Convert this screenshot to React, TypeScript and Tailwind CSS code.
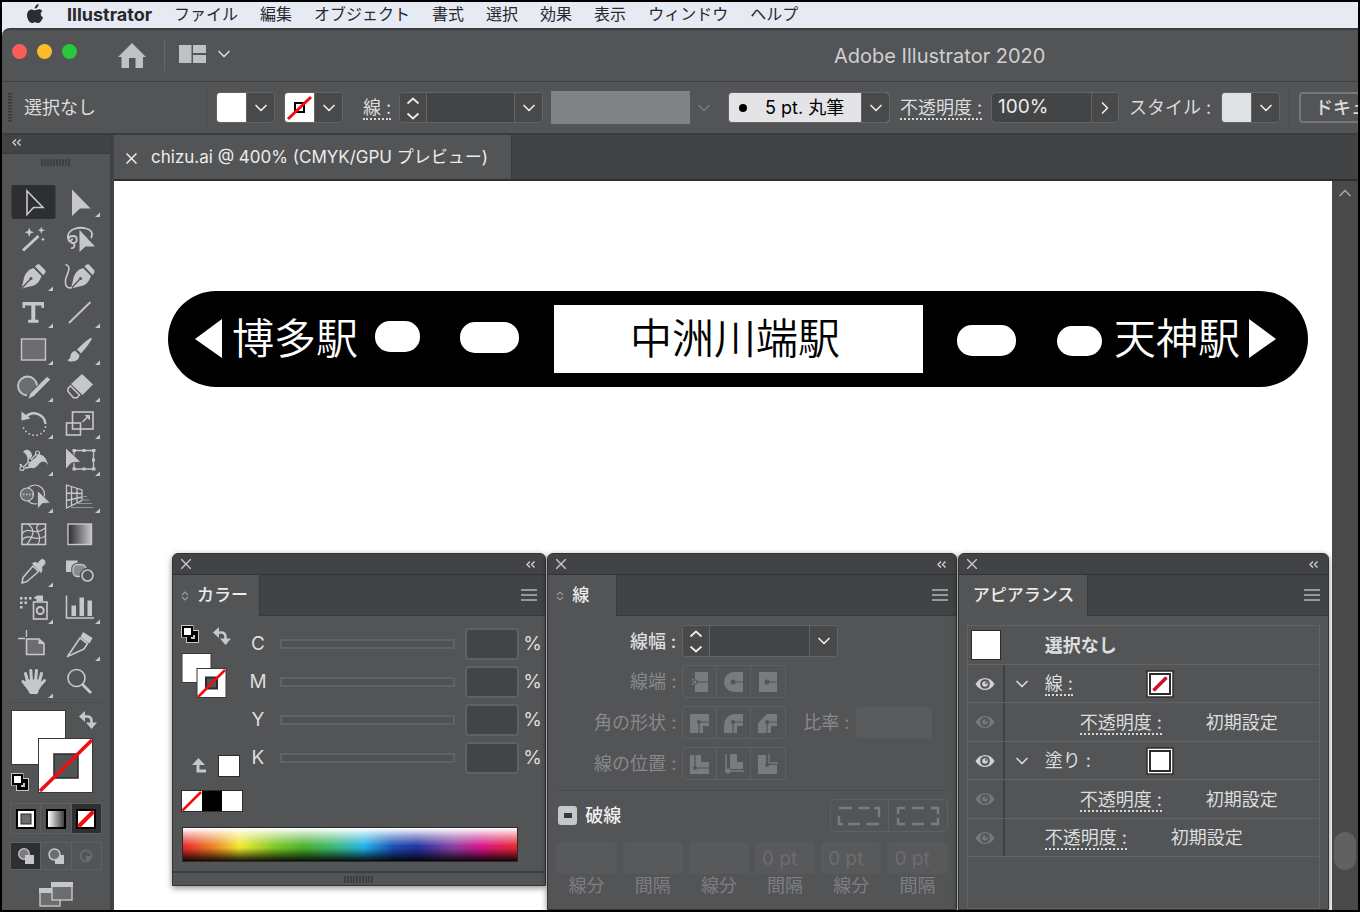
import React, { useState } from "react";
import clsx from "clsx";
import { ChevronDown, ChevronRight, ChevronUp } from "lucide-react";

type Tool = {
  id: string;
  label: string;
  more?: boolean;
  icon: React.ReactNode;
};

const MENUS = ["ファイル", "編集", "オブジェクト", "書式", "選択", "効果", "表示", "ウィンドウ", "ヘルプ"];

const CHANNELS = ["C", "M", "Y", "K"];

const DASHES = [
  { label: "線分", value: "" },
  { label: "間隔", value: "" },
  { label: "線分", value: "" },
  { label: "間隔", value: "0 pt" },
  { label: "線分", value: "0 pt" },
  { label: "間隔", value: "0 pt" },
];

const LIGHT = "#c6c7c9";
const line = { fill: "none", stroke: LIGHT, strokeWidth: 1.6 };

// every tool icon is drawn in a 47x37 cell
const TOOLS: Tool[] = [
  {
    id: "select",
    label: "選択",
    icon: <path d="M17 7V30.5L23.5 23.5H33Z" {...line} />,
  },
  {
    id: "direct",
    label: "ダイレクト選択",
    more: true,
    icon: <path d="M15 5.5V32L23 24.5H33.5Z" fill={LIGHT} />,
  },
  {
    id: "wand",
    label: "自動選択",
    icon: (
      <>
        <path d="M13 29.5L28.5 15" fill="none" stroke={LIGHT} strokeWidth="3" />
        <path
          d="M19.3 6.5L20.5 10L24 11.3L20.5 12.6L19.3 16L18 12.6L14.5 11.3L18 10ZM31.3 5.5L32.2 8.2L35 9.2L32.2 10.2L31.3 13L30.4 10.2L27.6 9.2L30.4 8.2ZM33 16.3L33.7 17.8L35 18.4L33.7 19L33 20.6L32.3 19L31 18.4L32.3 17.8Z"
          fill={LIGHT}
        />
      </>
    ),
  },
  {
    id: "lasso",
    label: "なげなわ",
    icon: (
      <>
        <path
          d="M14 21C9 18 10 11 17 8C25 5 35 8 35 13C35 15 34.5 16 34 17M14 21C10 20 11 15 16 15C21 15 21 22 16 22C13 22 13 18 16 18.5M16 22C19 24 17 28 14 27"
          {...line}
          strokeWidth="1.8"
        />
        <path d="M22.5 9V31L28.5 25.5H38Z" fill={LIGHT} />
      </>
    ),
  },
  {
    id: "pen",
    label: "ペン",
    more: true,
    icon: (
      <>
        <path d="M25 8.5Q27.5 5.5 29.5 6.5L35.5 12.5Q36 15 33 17Z" fill={LIGHT} />
        <path d="M23.5 10L31.5 18Q29 25.5 24 27.5L11.5 30.5L14.5 18Q17 12 23.5 10Z" fill={LIGHT} />
        <path d="M24 9.2L32.4 17.600" stroke="#535456" strokeWidth="1" />
        <path d="M12 30L20 21.5" stroke="#535456" strokeWidth="1.3" />
        <circle cx="21" cy="20.5" r="1.6" fill="#535456" />
      </>
    ),
  },
  {
    id: "curvature",
    label: "曲線",
    icon: (
      <>
        <path d="M27.5 8.5Q30 5.5 32 6.5L37.5 12.5Q38 15 35.5 17Z" fill={LIGHT} />
        <path d="M26 10L34 18Q31.5 25.5 26.5 27.5L14 30.5L17 18Q19.5 12 26 10Z" fill={LIGHT} />
        <path d="M26.5 9.2L34.900 17.600" stroke="#535456" strokeWidth="1" />
        <path d="M14.5 30L22.5 21.5" stroke="#535456" strokeWidth="1.3" />
        <circle cx="23.5" cy="20.5" r="1.6" fill="#535456" />
        <path d="M8.500 6.500C16 9 9 17 8.500 22C8 28 10 31 15 29.500" {...line} />
      </>
    ),
  },
  {
    id: "type",
    label: "文字",
    more: true,
    icon: (
      <path
        d="M12.5 7H34V13H31.5V10.500H25.300V24.800H28.500V27.700H18.200V24.800H21.300V10.500H15V13H12.5Z"
        fill={LIGHT}
      />
    ),
  },
  {
    id: "line",
    label: "直線",
    more: true,
    icon: <path d="M12 28L33.5 7" {...line} strokeWidth="1.8" />,
  },
  {
    id: "rect",
    label: "長方形",
    more: true,
    icon: <rect x="11.5" y="7" width="24" height="21" {...line} fill="#6c6d6f" strokeWidth="1.4" />,
  },
  {
    id: "brush",
    label: "ブラシ",
    more: true,
    icon: (
      <>
        <path d="M35 5.5Q35 9 24 21.5L20 17.5Q31.5 6 35 5.5Z" fill={LIGHT} />
        <path d="M18.5 19L22.5 23Q22 29.5 15 29.5Q11 29.5 10.5 28Q13.5 27 13.5 23.5Q14.5 19 18.5 19Z" fill={LIGHT} />
      </>
    ),
  },
  {
    id: "shaper",
    label: "Shaper",
    more: true,
    icon: (
      <>
        <path d="M17 26.500A9.500 9.500 0 1 1 27 16.500" {...line} fill="#6c6d6f" strokeWidth="1.8" />
        <path d="M37 7.5L40.5 10.5L23.5 27.5L18 30L20 24.5Z" fill={LIGHT} stroke="#535456" strokeWidth="0.6" />
      </>
    ),
  },
  {
    id: "eraser",
    label: "消しゴム",
    more: true,
    icon: (
      <>
        <path d="M25 5L36 15.5L25.5 26L14 15Z" fill={LIGHT} />
        <path d="M13.5 17L22.5 26L20 28.8H16.5L11 22.5V19.5Z" {...line} />
      </>
    ),
  },
  {
    id: "rotate",
    label: "回転",
    more: true,
    icon: (
      <>
        <path d="M16 10.5C23 4 34.5 8 35.5 18" {...line} strokeWidth="2.4" />
        <path d="M11.5 5.5V14.5L20.5 12.5Z" fill={LIGHT} />
        <path
          d="M35.5 21C34 31 18 33 13 21"
          fill="none"
          stroke={LIGHT}
          strokeWidth="1.8"
          strokeDasharray="0.1 4"
          strokeLinecap="round"
        />
      </>
    ),
  },
  {
    id: "scale",
    label: "拡大・縮小",
    more: true,
    icon: (
      <>
        <rect x="15.5" y="6" width="20.5" height="17" {...line} />
        <rect x="9.5" y="17" width="14" height="12" {...line} />
        <path d="M25.5 16L31 10.5" {...line} />
        <path d="M27.5 9H33V14.5Z" fill={LIGHT} />
      </>
    ),
  },
  {
    id: "width",
    label: "線幅",
    more: true,
    icon: (
      <>
        <path
          d="M13 9C16 4 22 8 22 12C22 16 24 17 26 14C29 9 36 12 38 22C35 17 31 18 29 21C25 27 18 26 18 21C18 15 17 11 13 9Z"
          fill={LIGHT}
        />
        <path d="M10.5 21C11 25 17 26 22 23" {...line} strokeWidth="2" />
        <path d="M12 25.5L27.5 10" stroke="#535456" strokeWidth="3" />
        <path d="M12 25.5L27.5 10" {...line} strokeWidth="1.2" />
        {[
          [12, 25.5],
          [20, 17.5],
          [27.5, 10],
        ].map(([cx, cy]) => (
          <circle key={cx} cx={cx} cy={cy} r="2" fill="#535456" stroke={LIGHT} strokeWidth="1.2" />
        ))}
      </>
    ),
  },
  {
    id: "transform",
    label: "自由変形",
    more: true,
    icon: (
      <>
        <path d="M17 7.5H36.5V26H17Z" {...line} strokeWidth="1.3" />
        <path
          d="M15.5 6h3.5v3h-3.5zM25.5 6h3v3h-3zM35 6h3.5v3h-3.5zM35 15.5h3v3h-3zM15.5 24.5h3.5v3h-3.5zM25.5 24.5h3v3h-3zM35 24.5h3.5v3h-3.5z"
          fill={LIGHT}
        />
        <path d="M8.5 4.5V26.5L14.5 20L24 19Z" fill={LIGHT} stroke="#535456" strokeWidth="1" />
      </>
    ),
  },
  {
    id: "builder",
    label: "シェイプ形成",
    more: true,
    icon: (
      <>
        <circle cx="25" cy="14.5" r="9.5" {...line} strokeWidth="1.2" />
        <circle cx="17" cy="14.5" r="6.5" {...line} fill="#6c6d6f" strokeWidth="1.2" />
        <path d="M13 14.5H24" {...line} strokeWidth="1.4" strokeDasharray="1.5 1.5" />
        <path d="M27.5 10.5V29L32.5 23.5L40.5 23Z" fill={LIGHT} stroke="#535456" strokeWidth="0.8" />
      </>
    ),
  },
  {
    id: "perspective",
    label: "遠近グリッド",
    more: true,
    icon: (
      <>
        <path
          d="M9.5 5L25 10V20.5L9.5 28ZM14.5 6.5V25.5M20 8.5V23M9.5 13L25 13.5M9.5 20.5L25 17"
          {...line}
          strokeWidth="1.3"
        />
        <path d="M25 16.5H30M23 20H32.5M19 23.5H35M14 27.5H36.5" stroke="#939496" strokeWidth="1.2" />
      </>
    ),
  },
  {
    id: "mesh",
    label: "メッシュ",
    icon: (
      <>
        <rect x="12" y="7" width="23.5" height="20.5" {...line} />
        <path
          d="M12 17C18 8 23 20 35.5 11M12 23C19 15 25 26 35.5 19M18 7C27 14 22 20 17 27.5M29 7C22 12 34 18 28 27.5"
          {...line}
          strokeWidth="1.3"
        />
      </>
    ),
  },
  {
    id: "gradient",
    label: "グラデーション",
    icon: <rect x="11" y="7" width="23.5" height="20.5" fill="url(#toolGradient)" stroke={LIGHT} strokeWidth="1.4" />,
  },
  {
    id: "eyedropper",
    label: "スポイト",
    more: true,
    icon: (
      <>
        <path d="M23 12L28.5 17.5L17 27.5L12 29L13 23.5Z" {...line} strokeLinejoin="round" />
        <path d="M22.5 9.5L25 8.5L28 9.5Q31 4 34 6Q37 9 31.5 13L32 16L31 18.5Z" fill={LIGHT} stroke={LIGHT} strokeLinejoin="round" />
      </>
    ),
  },
  {
    id: "blend",
    label: "ブレンド",
    icon: (
      <>
        <path d="M9 6.5H20.5V18H9Z" fill={LIGHT} />
        <rect x="16" y="10.5" width="13" height="12" rx="4.5" fill="#8b8c8e" stroke="#535456" strokeWidth="3.5" />
        <rect x="16" y="10.5" width="13" height="12" rx="4.5" fill="#8b8c8e" stroke={LIGHT} strokeWidth="1.3" />
        <circle cx="30.5" cy="21.5" r="5.8" fill="#535456" stroke="#535456" strokeWidth="4" />
        <circle cx="30.5" cy="21.5" r="5.5" {...line} />
      </>
    ),
  },
  {
    id: "spray",
    label: "シンボルスプレー",
    more: true,
    icon: (
      <>
        <path
          d="M10 6h2.5v2.5H10zM14.5 6H17v2.5h-2.5zM19 6h2.5v2.5H19zM10 10.5h2.5V13H10zM14.5 10.5H17V13h-2.5zM10 15h2.5v2.5H10zM26.5 4.5H33V10H26.5zM24.5 5.5H27V8H24.5z"
          fill={LIGHT}
        />
        <rect x="23.5" y="11" width="13.5" height="17" {...line} />
        <circle cx="30.2" cy="19.5" r="3.5" {...line} strokeWidth="2" />
      </>
    ),
  },
  {
    id: "graph",
    label: "グラフ",
    more: true,
    icon: (
      <>
        <path d="M9.5 4.5V27H37" {...line} />
        <path d="M14.5 14.5h4.5v10.500h-4.5zM22.500 6.500H27V25h-4.500zM30.500 9.500H35V25h-4.500z" fill={LIGHT} />
      </>
    ),
  },
  {
    id: "artboard",
    label: "アートボード",
    icon: (
      <>
        <path d="M16.5 2V9M8 10.5H15" {...line} strokeWidth="1.3" />
        <path d="M16.5 11H29L34 15.5V26.5H16.5Z" {...line} fill="#6c6d6f" />
        <path d="M28.5 10.5V16H34.5Z" fill={LIGHT} />
      </>
    ),
  },
  {
    id: "slice",
    label: "スライス",
    more: true,
    icon: (
      <>
        <path d="M26 4L35.5 10L32.5 15.5L23.5 9Z" fill={LIGHT} />
        <path d="M23 10L30.5 15.5L27 21L10.5 28.5Z" {...line} strokeLinejoin="round" />
      </>
    ),
  },
  {
    id: "hand",
    label: "手のひら",
    more: true,
    icon: (
      <>
        <path
          d="M18 18L15.5 8.5M21.5 16L20.8 5.5M25.5 16L26.5 5.5M29 18L31.5 8.5M18.5 23L13 16.5M29.5 21L34.5 15.5"
          stroke={LIGHT}
          strokeWidth="3"
          strokeLinecap="round"
        />
        <path d="M16.5 14.5H31L31.5 20.5Q28.5 25 27.5 29H20Q18 25 13.5 19Z" fill={LIGHT} />
      </>
    ),
  },
  {
    id: "zoom",
    label: "ズーム",
    icon: (
      <>
        <circle cx="19.5" cy="13" r="8.5" {...line} />
        <path d="M25.5 19.5L34 28" {...line} strokeWidth="2.8" />
      </>
    ),
  },
];

const Eye = ({ dim }: { dim?: boolean }) => (
  <svg width="20" height="14" viewBox="0 0 20 14" className={dim ? "text-[#77787a]" : "text-[#d0d1d3]"}>
    <path
      d="M0.5 7C5 -1 15 -1 19.5 7C15 15 5 15 0.5 7Z"
      fill="currentColor"
    />
    <circle cx="10" cy="7" r="4.8" fill="#535456" />
    <circle cx="10" cy="7" r="2.8" fill="currentColor" />
    <circle cx="11" cy="6" r="1" fill="#535456" />
  </svg>
);

const SwapIcon = () => (
  <svg width="18" height="18" viewBox="0 0 18 18">
    <path d="M5 5.5H8Q12.5 5.5 12.5 10V13" fill="none" stroke={LIGHT} strokeWidth="2.6" />
    <path d="M0 5.5L6 0V11ZM7 11.5H18L12.5 18Z" fill={LIGHT} />
  </svg>
);

const DefaultIcon = () => (
  <svg width="18" height="18" viewBox="0 0 18 18">
    <path d="M0 0H12.5V5H18V18H5V12.5H0Z" fill={LIGHT} />
    <rect x="6" y="6" width="11" height="11" fill="#000" />
    <rect x="10" y="10" width="4" height="4" fill="#c6c7c9" />
    <rect x="2" y="2" width="9" height="9" fill="#fff" stroke="#000" strokeWidth="2" />
  </svg>
);

const Stepper = () => (
  <svg width="26" height="28" viewBox="0 0 26 28" fill="none" stroke="#ececec" strokeWidth="1.8">
    <path d="M7.500 9.500L13 4.500L18.500 9.500M7.500 19.500L13 24.500L18.500 19.500" />
  </svg>
);

const Chevrons = () => (
  <svg width="9" height="7" viewBox="0 0 9 7" fill="none" stroke="#d0d1d3" strokeWidth="1.4">
    <path d="M4 0.5L1 3.5L4 6.5M8.5 0.5L5.5 3.5L8.5 6.5" />
  </svg>
);

const Grip = () => (
  <svg width="30" height="7" viewBox="0 0 30 7">
    <path
      d="M1 0V7M4 0V7M7 0V7M10 0V7M13 0V7M16 0V7M19 0V7M22 0V7M25 0V7M28 0V7"
      stroke="#38393b"
      strokeWidth="1.5"
    />
  </svg>
);

const DropButton = ({ label }: { label: string }) => (
  <button
    aria-label={label}
    className="flex h-full w-7 shrink-0 items-center justify-center border-l border-[#636466] bg-[#48494b] text-[#ececec]"
  >
    <ChevronDown size={20} strokeWidth={2} />
  </button>
);

const Colon = ({ children }: { children: React.ReactNode }) => (
  <span className="border-b-2 border-dotted border-[#d6d7d9] leading-6">{children} :</span>
);

type PanelProps = {
  title: string;
  tabClass: string;
  arrows?: boolean;
  className?: string;
  children: React.ReactNode;
};

const Panel = ({ title, tabClass, arrows, className, children }: PanelProps) => (
  <section
    className={clsx(
      "flex min-w-0 flex-col overflow-hidden rounded-t-md border border-[#333436] bg-[#535456] shadow-[0_2px_6px_rgba(0,0,0,0.45)]",
      className
    )}
  >
    <div className="flex h-[21px] shrink-0 items-center justify-between border-b border-[#333436] bg-[#424345] pr-2.5 pl-2">
      <button aria-label="閉じる">
        <svg width="10" height="10" viewBox="0 0 10 10" stroke="#c6c7c9" strokeWidth="1.4">
          <path d="M0 0L10 10M10 0L0 10" />
        </svg>
      </button>
      <button aria-label="折りたたむ">
        <Chevrons />
      </button>
    </div>
    <div className="flex h-[41px] shrink-0 bg-[#424345]">
      <h2
        className={clsx(
          "flex shrink-0 items-center gap-2 border-r border-[#38393b] bg-[#535456] text-[17px] font-medium text-[#ececec]",
          tabClass
        )}
      >
        {arrows && (
          <svg width="8" height="10" viewBox="0 0 8 10" fill="none" stroke="#9a9b9d" strokeWidth="1.2">
            <path d="M1 4L4 1L7 4M7 6L4 9L1 6" />
          </svg>
        )}
        {title}
      </h2>
      <div className="flex flex-1 items-center justify-end border-b border-[#38393b] pr-2">
        <button aria-label="パネルメニュー">
          <svg width="16" height="12" viewBox="0 0 16 12" stroke="#b4b5b7" strokeWidth="1.5">
            <path d="M0 1H16M0 6H16M0 11H16" />
          </svg>
        </button>
      </div>
    </div>
    {children}
  </section>
);

const MenuBar = () => (
  <nav className="flex h-[26px] shrink-0 items-center gap-[22px] bg-[#e6eaf3] pb-0.5 pl-[23px] text-base whitespace-nowrap text-[#26282c]">
    <svg width="20" height="20" viewBox="0 0 18 20" fill="#2b2d31">
      <path d="M12.5 0C12.7 2.2 11 4.5 8.7 4.6C8.5 2.5 10.4 0.4 12.5 0ZM16.3 7C14 8.5 14.2 12 17 13.2C16.3 15.5 14.3 19 12.2 19C10.9 19 10.5 18.2 9 18.2C7.4 18.2 7 19 5.8 19C3.5 19 1 14.9 1 11.3C1 7.5 3.4 5.4 5.7 5.4C7.2 5.4 8.2 6.3 9.2 6.3C10.2 6.3 11.4 5.3 13.1 5.3C14.3 5.3 15.6 5.9 16.3 7Z" />
    </svg>
    <button className="text-[18px] font-bold">Illustrator</button>
    {MENUS.map((m) => (
      <button key={m}>{m}</button>
    ))}
  </nav>
);

const TitleBar = () => (
  <header className="flex h-[54px] shrink-0 items-center rounded-tl-lg border-t-2 border-b border-t-[#3b3d40] border-b-[#3d3e40] bg-[#535456] pl-2.5">
    <div className="flex gap-2.5 pb-2">
      <button aria-label="閉じる" className="size-[15px] rounded-full bg-[#fb5e56]" />
      <button aria-label="しまう" className="size-[15px] rounded-full bg-[#fcbb2d]" />
      <button aria-label="拡大" className="size-[15px] rounded-full bg-[#28c83f]" />
    </div>
    <button aria-label="ホーム" className="ml-[41px]">
      <svg width="28" height="26" viewBox="0 0 28 26" fill="#c0c1c3">
        <path d="M14 0L28 14H25V25H17.5V15H11V25H3.5V14H0Z" />
      </svg>
    </button>
    <div className="mr-3.5 mb-0.5 ml-[18px] h-8 w-px bg-[#66676a]" />
    <button aria-label="ワークスペース" className="mb-1 flex items-center gap-2 text-[#d8d9db]">
      <svg width="27" height="18" viewBox="0 0 27 18" fill="#c0c1c3">
        <path d="M0 0H12.5V18H0ZM14 0H27V8H14ZM14 10H27V18H14Z" />
      </svg>
      <ChevronDown size={20} strokeWidth={2} />
    </button>
    <h1 className="flex-1 pl-[600px] text-[20px] whitespace-nowrap text-[#cfd0d2]">Adobe Illustrator 2020</h1>
  </header>
);

const ControlBar = () => (
  <div className="flex h-[53px] shrink-0 items-center overflow-hidden border-b-2 border-[#3b3c3e] bg-[#535456] pl-1.5 text-[18px] whitespace-nowrap text-[#dcdddf]">
    <svg width="4" height="30" viewBox="0 0 4 30" className="shrink-0">
      <path d="M2 0V30" stroke="#38393b" strokeWidth="4" strokeDasharray="1.5 1.5" />
    </svg>
    <p className="w-[194px] shrink-0 pl-3">選択なし</p>
    <div className="mr-[9px] h-10 w-px shrink-0 bg-[#4a4b4d]" />

    <div className="mr-[9px] flex h-[31px] shrink-0 overflow-hidden rounded-sm border border-[#636466]">
      <span className="w-[29px] bg-white" />
      <DropButton label="塗り" />
    </div>
    <div className="flex h-[31px] shrink-0 overflow-hidden rounded-sm border border-[#636466]">
      <svg width="29" height="29" viewBox="0 0 29 29">
        <rect width="29" height="29" fill="#fff" />
        <rect x="10" y="10" width="9" height="9" fill="none" stroke="#000" strokeWidth="2" />
        <path d="M3 26L26 4" stroke="#f20d0d" strokeWidth="3" />
      </svg>
      <DropButton label="線" />
    </div>

    <label htmlFor="barStroke" className="mr-[9px] ml-5 w-[27px] shrink-0">
      <Colon>線</Colon>
    </label>
    <div className="flex h-[31px] shrink-0 overflow-hidden rounded-sm border border-[#636466] bg-[#434446]">
      <button aria-label="線幅の増減" className="border-r border-[#636466] bg-[#48494b]">
        <Stepper />
      </button>
      <input id="barStroke" className="w-[87px] bg-transparent px-1.5" />
      <DropButton label="線幅" />
    </div>

    <div className="ml-2 flex h-[33px] shrink-0">
      <span className="w-[139px] bg-[#808183]" />
      <button disabled aria-label="可変線幅プロファイル" className="flex w-7 items-center justify-center text-[#77787a]">
        <ChevronDown size={20} strokeWidth={2} />
      </button>
    </div>

    <div className="ml-2.5 flex h-[31px] shrink-0 overflow-hidden rounded-sm border border-[#636466] bg-[#e4e4e6] text-black">
      <span className="flex w-7 items-center justify-center">
        <i className="size-2 rounded-full bg-black" />
      </span>
      <select aria-label="ブラシ定義" className="w-[104px] appearance-none pl-2">
        <option>5 pt. 丸筆</option>
      </select>
      <DropButton label="ブラシ" />
    </div>

    <label htmlFor="barOpacity" className="ml-2.5 w-[91px] shrink-0">
      <Colon>不透明度</Colon>
    </label>
    <div className="flex h-[31px] shrink-0 overflow-hidden rounded-sm border border-[#636466] bg-[#434446]">
      <input id="barOpacity" defaultValue="100%" className="w-[99px] bg-transparent px-1.5 text-[19px] text-[#ececec]" />
      <button aria-label="不透明度" className="flex w-[27px] items-center justify-center border-l border-[#636466] bg-[#48494b] text-[#ececec]">
        <ChevronRight size={20} strokeWidth={2} />
      </button>
    </div>

    <span className="ml-2.5 w-[92px] shrink-0">スタイル :</span>
    <div className="flex h-[31px] shrink-0 overflow-hidden rounded-sm border border-[#636466]">
      <span className="w-[29px] bg-[#e0e1e3]" />
      <DropButton label="グラフィックスタイル" />
    </div>
    <div className="mx-[9px] h-10 w-px shrink-0 bg-[#4a4b4d]" />
    <button className="h-[31px] shrink-0 rounded-sm border-2 border-[#77787a] px-3.5 font-medium">ドキュ</button>
  </div>
);

const Toolbar = () => {
  const [active, setActive] = useState("select");

  return (
    <aside className="flex w-[110px] shrink-0 flex-col border-r-2 border-[#3f4042] bg-[#535456]">
      <div className="flex h-[19px] shrink-0 items-center border-b border-[#3b3c3e] bg-[#424345] pl-2.5">
        <button aria-label="折りたたむ" className="pb-1">
          <Chevrons />
        </button>
      </div>
      <div className="flex h-[30px] shrink-0 justify-center pt-[5px]">
        <Grip />
      </div>
      <div className="grid shrink-0 grid-cols-[47px_47px] pl-2">
        {TOOLS.map((t) => (
          <button key={t.id} aria-label={t.label} onClick={() => setActive(t.id)} className="h-[37px]">
            <svg width="47" height="37" viewBox="0 0 47 37">
              <defs>
                <linearGradient id="toolGradient">
                  <stop offset="0" stopColor="#2b2b2d" />
                  <stop offset="1" stopColor="#c6c7c9" />
                </linearGradient>
              </defs>
              {active === t.id && <rect x="1.5" y="1" width="44" height="34" rx="2" fill="#2e2f31" />}
              {t.icon}
              {t.more && <path d="M43 28.5V33H38Z" fill={LIGHT} />}
            </svg>
          </button>
        ))}
      </div>

      <div className="mx-2 shrink-0 border-t border-[#4b4c4e] pt-1.5">
        <svg width="94" height="84" viewBox="0 0 94 84">
          <rect x="1.5" y="1.5" width="54" height="54" fill="#fff" stroke="#38393b" />
          <rect x="28.5" y="29.5" width="54" height="54" fill="#fff" stroke="#38393b" />
          <rect x="44" y="45" width="24" height="24" fill="#535456" stroke="#2b2b2d" strokeWidth="1.5" />
          <path d="M30 82L82 31" stroke="#f20d0d" strokeWidth="3.5" />
          <g transform="translate(69 2)">
            <SwapIcon />
          </g>
          <g transform="translate(1 64)">
            <DefaultIcon />
          </g>
        </svg>
      </div>

      <div className="mx-2 mt-2.5 flex h-[31px] shrink-0 divide-x divide-[#5e5f61] border border-[#5e5f61]">
        <button aria-label="カラー" className="flex flex-1 items-center justify-center">
          <svg width="20" height="20" viewBox="0 0 20 20">
            <rect x="1" y="1" width="18" height="18" fill="#fff" stroke="#000" strokeWidth="2" />
            <rect x="5" y="5" width="10" height="10" fill="#6c6d6f" stroke="#2b2b2d" />
          </svg>
        </button>
        <button aria-label="グラデーション" className="flex flex-1 items-center justify-center">
          <i className="size-5 border-2 border-black bg-linear-to-r from-white to-[#444446]" />
        </button>
        <button aria-label="なし" className="flex flex-1 items-center justify-center bg-[#2e2f31]">
          <svg width="20" height="20" viewBox="0 0 20 20">
            <rect x="1" y="1" width="18" height="18" fill="#fff" stroke="#000" strokeWidth="2" />
            <path d="M2.5 17.5L17.5 2.5" stroke="#f20d0d" strokeWidth="4" />
          </svg>
        </button>
      </div>

      <div className="mx-2 mt-2 flex h-7 shrink-0 divide-x divide-[#5e5f61] border border-[#5e5f61]">
        <button aria-label="標準描画" className="flex flex-1 items-center justify-center bg-[#2e2f31]">
          <svg width="16" height="16" viewBox="0 0 16 16">
            <circle cx="6" cy="6" r="5.3" fill="#7a7b7d" stroke={LIGHT} strokeWidth="1.3" />
            <rect x="7" y="7" width="9" height="9" fill={LIGHT} />
          </svg>
        </button>
        <button aria-label="背面描画" className="flex flex-1 items-center justify-center">
          <svg width="16" height="16" viewBox="0 0 16 16">
            <rect x="7" y="7" width="9" height="9" fill={LIGHT} />
            <circle cx="6.5" cy="6.5" r="5.5" fill="#6c6d6f" stroke={LIGHT} strokeWidth="1.5" />
          </svg>
        </button>
        <button disabled aria-label="内側描画" className="flex flex-1 items-center justify-center">
          <svg width="14" height="14" viewBox="0 0 14 14">
            <circle cx="7" cy="7" r="5.5" fill="none" stroke="#6c6d6f" strokeWidth="1.5" />
            <path d="M7 7H12Q12 12 7 12Z" fill="#6c6d6f" />
          </svg>
        </button>
      </div>

      <button aria-label="スクリーンモード" className="mt-3 shrink-0 self-center">
        <svg width="34" height="26" viewBox="0 0 34 26">
          <rect x="1" y="7" width="20" height="17" fill="#6c6d6f" stroke={LIGHT} strokeWidth="1.4" />
          <path d="M0 6H22V11H0Z" fill={LIGHT} />
          <rect x="13" y="1" width="20" height="17" fill="#6c6d6f" stroke={LIGHT} strokeWidth="1.4" />
          <path d="M12 0H34V5H12Z" fill={LIGHT} />
        </svg>
      </button>
    </aside>
  );
};

const StationSign = () => (
  <svg viewBox="0 0 1140 96" className="block w-full font-[350]" fontSize="42">
    <rect width="1140" height="96" rx="48" fill="#000" />
    <path d="M27 48L54 28V67Z" fill="#fff" />
    <text x="64" y="63" fill="#fff">
      博多駅
    </text>
    <rect x="207" y="30" width="45" height="31" rx="15" fill="#fff" />
    <rect x="292" y="31" width="59" height="31" rx="15" fill="#fff" />
    <rect x="386" y="14" width="369" height="68" fill="#fff" />
    <text x="567" y="63" textAnchor="middle" fill="#000">
      中洲川端駅
    </text>
    <rect x="789" y="34" width="59" height="31" rx="15" fill="#fff" />
    <rect x="889" y="35" width="45" height="30" rx="15" fill="#fff" />
    <text x="946" y="63" fill="#fff">
      天神駅
    </text>
    <path d="M1081 28L1108 48L1081 67Z" fill="#fff" />
  </svg>
);

const ColorPanel = () => (
  <Panel title="カラー" tabClass="w-[87px] pl-2" arrows className="self-start">
    <div className="pt-[9px] pr-1 pl-2">
      <div className="flex">
        <div className="flex w-[67px] flex-col justify-between">
          <svg width="50" height="73" viewBox="0 0 50 73">
            <DefaultIcon />
            <g transform="translate(32 2)">
              <SwapIcon />
            </g>
            <rect x="1" y="28.5" width="29" height="29" fill="#fff" stroke="#38393b" />
            <rect x="16" y="43.5" width="29" height="29" fill="#fff" stroke="#38393b" />
            <rect x="25" y="52.5" width="11" height="11" fill="#535456" stroke="#2b2b2d" strokeWidth="2" />
            <path d="M17 72L44 45" stroke="#f20d0d" strokeWidth="2.5" />
          </svg>
          <div className="flex items-center justify-end gap-3 pr-2">
            <svg width="14" height="16" viewBox="0 0 14 16">
              <path d="M6 5V13H14" fill="none" stroke={LIGHT} strokeWidth="3" />
              <path d="M0 7L6.5 0L13 7Z" fill={LIGHT} />
            </svg>
            <span className="size-[22px] border border-[#2b2b2d] bg-white" />
          </div>
        </div>
        <div className="flex-1">
          {CHANNELS.map((c) => (
            <div key={c} className="flex h-[38px] items-center text-[19px] text-[#dcdddf]">
              <label htmlFor={`channel${c}`} className="w-5 text-center">
                {c}
              </label>
              <input
                type="range"
                disabled
                aria-label={c}
                className="mr-2.5 ml-3 h-2.5 min-w-0 flex-1 appearance-none border-2 border-[#616264] bg-[#505153] [&::-webkit-slider-thumb]:size-0 [&::-webkit-slider-thumb]:appearance-none"
              />
              <input id={`channel${c}`} className="h-8 w-[54px] rounded-sm border-2 border-[#5f6062] bg-[#434446] px-1" />
              <span className="w-[22px] pl-1">%</span>
            </div>
          ))}
        </div>
      </div>

      <div className="mt-[13px] flex h-[22px]">
        <svg width="62" height="22" viewBox="0 0 62 22">
          <rect x="0.5" y="0.5" width="61" height="21" fill="#fff" stroke="#2b2b2d" />
          <rect x="21" y="1" width="20" height="20" fill="#000" />
          <path d="M1.5 20.5L20 2" stroke="#f20d0d" strokeWidth="2.5" />
        </svg>
      </div>
      <div className="mt-[15px] mr-[23px] ml-px h-[35px] border border-[#2b2b2d] bg-[linear-gradient(to_bottom,#ffffff_0%,rgba(255,255,255,0.5)_25%,rgba(255,255,255,0)_55%,rgba(0,0,0,0)_60%,rgba(0,0,0,0.9)_100%),linear-gradient(to_right,#e8262a_0%,#ee7f25_9%,#efe92f_17%,#84c826_27%,#4ab02a_36%,#3cb87c_46%,#1fb3e6_54%,#1a4eb5_63%,#2233a0_70%,#8a3fa0_81%,#d5148c_89%,#e8262a_100%)]" />
    </div>
    <div className="mt-[9px] flex h-3.5 items-center justify-center border-t-2 border-[#3b3c3e]">
      <Grip />
    </div>
  </Panel>
);

type IconRowProps = { label: string; icons: React.ReactNode[] };

const IconRow = ({ label, icons }: IconRowProps) => (
  <div className="flex items-center">
    <span className="w-[126px] pr-1.5 text-right text-[#88898b]">{label} :</span>
    <div className="flex h-[33px] divide-x divide-[#5f6062] rounded-sm border border-[#5f6062]">
      {icons.map((icon, i) => (
        <button key={i} disabled aria-label={`${label} ${i + 1}`} className="flex w-[34px] items-center justify-center">
          <svg width="20" height="20" viewBox="0 0 20 20" fill="#7a7b7d">
            {icon}
          </svg>
        </button>
      ))}
    </div>
  </div>
);

const cut = { fill: "none", stroke: "#535456", strokeWidth: 1.2 };

const CAPS = [
  <><path d="M5 0H18V20H5V13H2V7H5Z" /><circle cx="5" cy="10" r="2.2" {...cut} /><path d="M7 10H19" {...cut} /></>,
  <><path d="M10 0H19V20H10A10 10 0 0 1 10 0Z" /><circle cx="9" cy="10" r="2.5" fill="#535456" /><path d="M10 10H20" {...cut} /></>,
  <><path d="M1 0H19V20H1Z" /><circle cx="9" cy="10" r="2.5" fill="#535456" /><path d="M10 10H20" {...cut} /></>,
];

const CORNERS = [
  <><path d="M0 1H19V13H13V20H0Z" /><path d="M9 20V9H20" {...cut} /><circle cx="9" cy="9" r="2" fill="#535456" /></>,
  <><path d="M0 20V14Q0 1 13 1H19V13H13V20Z" /><path d="M9 20V9H20" {...cut} /><circle cx="9" cy="9" r="2" fill="#535456" /></>,
  <><path d="M0 20V10L9 1H19V13H13V20Z" /><path d="M9 20V9H20" {...cut} /><circle cx="9" cy="9" r="2" fill="#535456" /></>,
];

const ALIGNS = [
  <><path d="M0 1H11V8H19V20H0Z" /><path d="M5 1V14H19" {...cut} /><circle cx="5" cy="14" r="2" fill="#535456" /></>,
  <><path d="M6 0H13V8H19V15H6Z" /><path d="M2 0V17H20" fill="none" stroke="#7a7b7d" strokeWidth="1.5" /><circle cx="4" cy="17" r="2.5" fill="#7a7b7d" /></>,
  <><path d="M0 1H8V11H19V20H0Z" /><path d="M11 0V9H20" fill="none" stroke="#7a7b7d" strokeWidth="1.3" /><circle cx="9" cy="11" r="2" fill="#535456" /></>,
];

const StrokePanel = () => (
  <Panel title="線" tabClass="w-[69px] pl-2" arrows>
    <div className="px-2 pt-[9px] text-[18px]">
      <div className="flex flex-col gap-2">
        <div className="flex items-center">
          <label htmlFor="strokeWidth" className="w-[126px] pr-1.5 text-right font-medium text-[#dcdddf]">
            線幅 :
          </label>
          <div className="flex h-8 overflow-hidden rounded-sm border border-[#636466] bg-[#434446]">
            <button aria-label="線幅の増減" className="border-r border-[#636466] bg-[#48494b]">
              <Stepper />
            </button>
            <input id="strokeWidth" className="w-[99px] bg-transparent px-1.5" />
            <DropButton label="線幅" />
          </div>
        </div>
        <IconRow label="線端" icons={CAPS} />
        <div className="flex items-center">
          <IconRow label="角の形状" icons={CORNERS} />
          <label htmlFor="ratio" className="pr-1.5 pl-[17px] text-[#88898b]">
            比率 :
          </label>
          <input id="ratio" disabled className="h-[31px] w-[76px] rounded-sm bg-[#5a5b5d]" />
        </div>
        <IconRow label="線の位置" icons={ALIGNS} />
      </div>

      <div className="mt-2.5 flex items-center border-t border-[#4a4b4d] pt-2">
        <label className="flex items-center gap-2 font-medium text-[#f0f0f0]">
          <input type="checkbox" className="peer sr-only" />
          <span className="ml-0.5 flex size-[19px] items-center justify-center rounded-[3px] bg-[#c6c7c9]">
            <i className="h-[5px] w-2 bg-[#38393b]" />
          </span>
          破線
        </label>
        <div className="ml-auto flex h-[33px] divide-x divide-[#5f6062] rounded-sm border border-[#5f6062]">
          <button disabled aria-label="線分と間隔の正確な長さを保持" className="flex w-[58px] items-center justify-center">
            <svg width="44" height="20" viewBox="0 0 44 20" fill="none" stroke="#7a7b7d" strokeWidth="2.5">
              <path d="M2 2H15M21 2H33M37 2H42V11M2 10V18H6M11 18H23M29 18H42" />
            </svg>
          </button>
          <button disabled aria-label="コーナーに合わせて調整" className="flex w-[58px] items-center justify-center">
            <svg width="44" height="20" viewBox="0 0 44 20" fill="none" stroke="#7a7b7d" strokeWidth="2.5">
              <path d="M9 2H2V8M16 2H28M35 2H42V8M2 12V18H9M16 18H28M35 18H42V12" />
            </svg>
          </button>
        </div>
      </div>

      <div className="mt-2.5 grid grid-cols-6 gap-1.5">
        {DASHES.map((d, i) => (
          <label key={i} className="flex flex-col items-center text-[#7e7f81]">
            <input
              disabled
              defaultValue={d.value}
              className="h-8 w-full rounded-sm bg-[#58595b] px-[7px] text-[19px] text-[#6c6d6f]"
            />
            <span className="leading-6">{d.label}</span>
          </label>
        ))}
      </div>
    </div>
  </Panel>
);

type AppearanceRowProps = {
  label: string;
  value?: string;
  swatch?: "none" | "white";
  nested?: boolean;
  plain?: boolean;
};

const AppearanceRow = ({ label, value, swatch, nested, plain }: AppearanceRowProps) => (
  <li className={clsx("flex items-center border-b border-[#626365]", nested ? "h-[39px]" : "h-[38px]")}>
    <button aria-label="表示の切り替え" className="flex h-full w-[37px] shrink-0 items-center justify-center border-r-2 border-[#3f4042]">
      <Eye dim={!swatch} />
    </button>
    <span className={clsx("flex shrink-0 justify-center text-[#d8d9db]", nested ? "w-[75px]" : "w-10")}>
      {swatch && <ChevronDown size={20} strokeWidth={2} className="mr-1.5" />}
    </span>
    <span className={clsx("shrink-0", swatch ? "w-[101px]" : "w-[126px]")}>
      {plain ? `${label} :` : <Colon>{label}</Colon>}
    </span>
    {value}
    {swatch && (
      <svg width="28" height="28" viewBox="0 0 28 28">
        <rect x="1" y="1" width="26" height="26" fill="#fff" stroke="#2b2b2d" strokeWidth="1.5" />
        <rect x="4" y="4" width="20" height="20" fill="#fff" stroke="#2b2b2d" strokeWidth="2" />
        {swatch === "none" && <path d="M7.5 20.5L20.5 7.5" stroke="#c8102e" strokeWidth="3.5" />}
      </svg>
    )}
  </li>
);

const AppearancePanel = () => (
  <Panel title="アピアランス" tabClass="w-[129px] pl-3.5">
    <ul className="mx-2 mt-[9px] flex-1 border border-[#626365] text-[18px] whitespace-nowrap text-[#dcdddf]">
      <li className="flex h-[39px] items-center border-b border-[#626365] pl-[3px]">
        <span className="size-[30px] border border-[#2b2b2d] bg-white" />
        <b className="pl-11">選択なし</b>
      </li>
      <AppearanceRow label="線" swatch="none" />
      <AppearanceRow label="不透明度" value="初期設定" nested />
      <AppearanceRow label="塗り" swatch="white" plain />
      <AppearanceRow label="不透明度" value="初期設定" nested />
      <AppearanceRow label="不透明度" value="初期設定" />
    </ul>
  </Panel>
);

const App = () => {
  return (
    <div className="flex h-screen flex-col overflow-hidden border-2 border-black bg-[#e6eaf3] font-['Inter','Noto_Sans_CJK_JP',sans-serif]">
      <MenuBar />
      <TitleBar />
      <ControlBar />
      <div className="flex min-h-0 flex-1">
        <Toolbar />
        <main className="flex min-w-0 flex-1 flex-col bg-[#424345] pl-0.5">
          <div className="flex h-[46px] shrink-0 border-b-2 border-[#2e2f31]">
            <div className="flex items-center gap-3.5 border-r border-[#38393b] bg-[#535456] pt-0.5 pr-[23px] pl-3 text-[17px] whitespace-nowrap text-[#ececec]">
              <button aria-label="閉じる">
                <svg width="11" height="11" viewBox="0 0 11 11" stroke="#ececec" strokeWidth="1.5">
                  <path d="M0.5 0.5L10.5 10.5M10.5 0.5L0.5 10.5" />
                </svg>
              </button>
              chizu.ai @ 400% (CMYK/GPU プレビュー)
            </div>
          </div>
          <div className="flex min-h-0 flex-1">
            <div className="flex min-w-0 flex-1 flex-col overflow-hidden bg-white">
              <div className="pt-[110px] pr-6 pl-[54px]">
                <StationSign />
              </div>
              <div className="mt-[166px] mr-[3px] ml-[58px] grid min-h-0 flex-1 grid-cols-[374fr_409fr_371fr] gap-px">
                <ColorPanel />
                <StrokePanel />
                <AppearancePanel />
              </div>
            </div>
            <div className="flex w-[26px] shrink-0 flex-col items-center justify-between bg-[#48494b] pt-0.5 pb-10 text-[#a4a5a7]">
              <ChevronUp size={20} strokeWidth={2} />
              <span className="h-[38px] w-[22px] rounded-full bg-[#606163]" />
            </div>
          </div>
        </main>
      </div>
    </div>
  );
};

export default App;
